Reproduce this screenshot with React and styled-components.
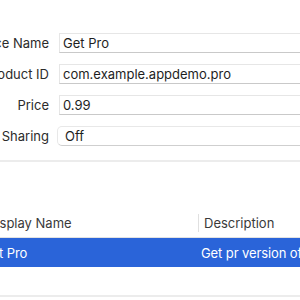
import React from "react";
import styled, { createGlobalStyle } from "styled-components";

const GlobalStyle = createGlobalStyle`
  html, body {
    margin: 0;
    padding: 0;
    background: #ffffff;
  }
  body {
    font-family: Inter, "Liberation Sans", sans-serif;
    font-size: 13px;
    color: #262626;
    -webkit-font-smoothing: antialiased;
  }
`;

const Window = styled.div`
  width: 300px;
  height: 300px;
  overflow: hidden;
  background: #ffffff;
`;

const Form = styled.div`
  display: grid;
  grid-template-columns: 49px 1fr;
  column-gap: 8px;
  row-gap: 11px;
  width: 380px;
  padding-top: 33px;
`;

const Label = styled.div`
  display: flex;
  justify-content: flex-end;
  align-items: center;
  white-space: nowrap;
  height: 20px;
  color: #2b2b2b;
`;

const TextField = styled.div`
  display: flex;
  align-items: center;
  height: 20px;
  box-sizing: border-box;
  margin-left: 2px;
  padding-left: 3px;
  background: #ffffff;
  border: 1px solid #e6e6e6;
  border-bottom-color: #c9c9c9;
  color: #1e1e1e;
  white-space: nowrap;
`;

const PopUp = styled.div`
  display: flex;
  align-items: center;
  height: 20px;
  box-sizing: border-box;
  padding-left: 7px;
  background: #ffffff;
  border: 1px solid #e8e8e8;
  border-bottom-color: #cfcfcf;
  border-radius: 5px;
  color: #1e1e1e;
`;

const Separator = styled.div`
  height: 2px;
  margin-top: 14px;
  background: #ececec;
`;

const Table = styled.div`
  display: grid;
  grid-template-columns: 218px 1fr;
  width: 420px;
  margin-left: -20px;
  margin-top: 47px;
`;

const HeaderCell = styled.div`
  display: flex;
  align-items: center;
  height: 28px;
  border-bottom: 1px solid #e2e2e2;
  color: #3a3a3a;
  white-space: nowrap;
`;

const HeaderText = styled.span`
  display: flex;
  align-items: center;
  height: 18px;
  padding-left: ${(p) => (p.$divider ? "5px" : "7px")};
  border-left: ${(p) => (p.$divider ? "1px solid #e0e0e0" : "none")};
`;

const Cell = styled.div`
  display: flex;
  align-items: center;
  height: 29px;
  padding-left: ${(p) => p.$pad}px;
  background: ${(p) => (p.$selected ? "#2a64d9" : "transparent")};
  color: ${(p) => (p.$selected ? "#ffffff" : "#262626")};
  white-space: nowrap;
  letter-spacing: -0.1px;
`;

const BottomLine = styled.div`
  height: 2px;
  margin-top: 28px;
  background: #ececec;
`;

const fields = [
  { label: "Reference Name", value: "Get Pro" },
  { label: "Product ID", value: "com.example.appdemo.pro" },
  { label: "Price", value: "0.99" },
];

const App = () => {
  return (
    <Window>
      <GlobalStyle />
      <Form>
        {fields.map((f) => (
          <React.Fragment key={f.label}>
            <Label>{f.label}</Label>
            <TextField>{f.value}</TextField>
          </React.Fragment>
        ))}
        <Label>Family Sharing</Label>
        <PopUp>Off</PopUp>
      </Form>
      <Separator />
      <Table>
        <HeaderCell>
          <HeaderText>Display Name</HeaderText>
        </HeaderCell>
        <HeaderCell>
          <HeaderText $divider>Description</HeaderText>
        </HeaderCell>
        <Cell $selected $pad={2}>Get Pro</Cell>
        <Cell $selected $pad={3}>Get pr version of the app</Cell>
      </Table>
      <BottomLine />
    </Window>
  );
};

export default App;
